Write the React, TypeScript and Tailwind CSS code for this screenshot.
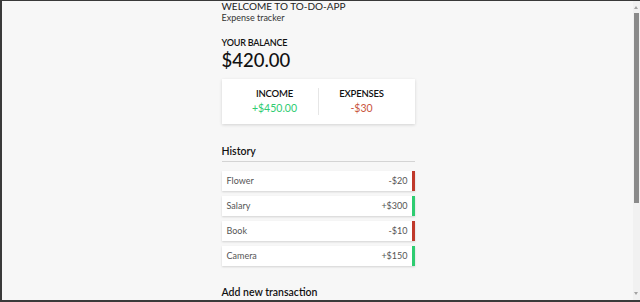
const history = [
  { id: 1, text: "Flower", amount: "-$20", plus: false },
  { id: 2, text: "Salary", amount: "+$300", plus: true },
  { id: 3, text: "Book", amount: "-$10", plus: false },
  { id: 4, text: "Camera", amount: "+$150", plus: true },
];

export default function App() {
  return (
    <div className="h-[302px] w-[640px] overflow-hidden bg-[#3a3a3a] pl-[2px] pt-[1px] pb-[2px] font-['Lato',sans-serif]">
      <div className="flex h-full bg-[#f7f7f7]">
        {/* page */}
        <div className="flex-1 overflow-hidden">
          <div className="mx-auto w-[194px] pl-[1px]">
            <h1 className="text-[10px] leading-[11px] text-[#222]">WELCOME TO TO-DO-APP</h1>
            <p className="text-[9px] leading-[12px] text-[#333]">Expense tracker</p>

            <h4 className="mt-[12px] text-[9px] font-semibold leading-[13px] text-[#111] tracking-[-0.2px]">YOUR BALANCE</h4>
            <h2 className="text-[18.5px] leading-[22px] font-medium text-[#111]">$420.00</h2>

            <div className="mt-[8px] flex bg-white px-[10px] py-[9px] shadow-[0_1px_3px_rgba(0,0,0,0.15)]">
              <div className="flex-1 text-center border-r border-[#e6e6e6]">
                <div className="text-[9.5px] font-semibold leading-[12px] text-[#111] tracking-[-0.2px]">INCOME</div>
                <div className="mt-[1px] text-[10.5px] leading-[14px] text-[#2ecc71]">+$450.00</div>
              </div>
              <div className="flex-1 text-center">
                <div className="text-[9.5px] font-semibold leading-[12px] text-[#111] tracking-[-0.2px]">EXPENSES</div>
                <div className="mt-[1px] text-[10.5px] leading-[14px] text-[#c9553d]">-$30</div>
              </div>
            </div>

            <h3 className="mt-[20px] border-b border-[#d4d4d4] pb-[3px] text-[10.5px] font-semibold leading-[14px] text-[#111]">
              History
            </h3>

            <ul className="mt-[9px] flex flex-col gap-[5px]">
              {history.map((t) => (
                <li
                  key={t.id}
                  className={`flex h-[20px] items-center justify-between bg-white pl-[5px] pr-[4px] text-[9px] text-[#555] shadow-[0_1px_2px_rgba(0,0,0,0.15)] border-r-[3px] ${
                    t.plus ? "border-[#2ecc71]" : "border-[#c0392b]"
                  }`}
                >
                  <span>{t.text}</span>
                  <span>{t.amount}</span>
                </li>
              ))}
            </ul>

            <h3 className="mt-[19px] text-[10.5px] font-semibold leading-[14px] text-[#111]">Add new transaction</h3>
          </div>
        </div>

        {/* scrollbar */}
        <div className="relative w-[7px] bg-[#f1f1f1]">
          <div className="absolute left-[1px] top-[5px] h-0 w-0 border-x-[2.5px] border-b-[3px] border-x-transparent border-b-[#a3a3a3]" />
          <div className="absolute left-[1px] top-[12px] h-[190px] w-[5px] bg-[#8a8a8a]" />
          <div className="absolute left-[1px] bottom-[5px] h-0 w-0 border-x-[2.5px] border-t-[3px] border-x-transparent border-t-[#a3a3a3]" />
        </div>
      </div>
    </div>
  );
}
